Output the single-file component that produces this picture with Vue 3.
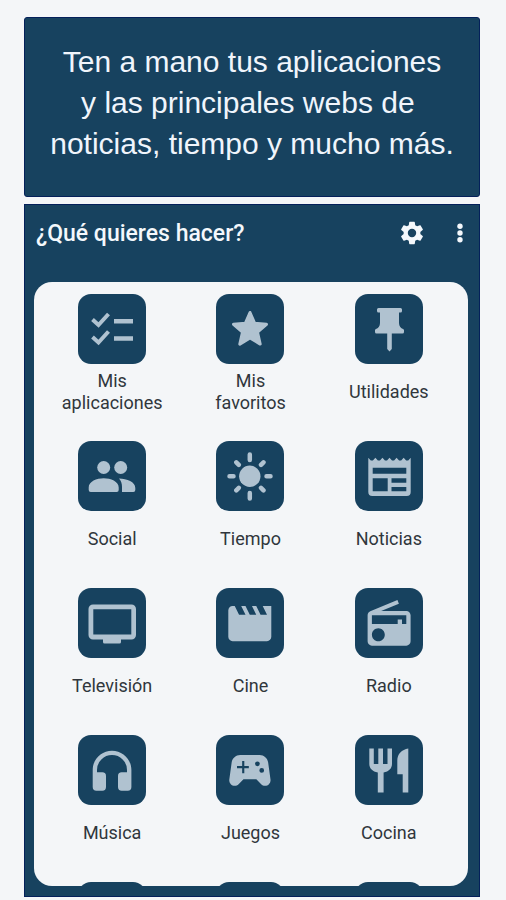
<script setup>
const apps = [
  { id: 'apps', label: 'Mis aplicaciones' },
  { id: 'star', label: 'Mis favoritos' },
  { id: 'pin', label: 'Utilidades' },
  { id: 'social', label: 'Social' },
  { id: 'sun', label: 'Tiempo' },
  { id: 'news', label: 'Noticias' },
  { id: 'tv', label: 'Televisión' },
  { id: 'movie', label: 'Cine' },
  { id: 'radio', label: 'Radio' },
  { id: 'music', label: 'Música' },
  { id: 'games', label: 'Juegos' },
  { id: 'food', label: 'Cocina' }
]
</script>

<template>
  <div class="page">
    <header class="banner">
      <p class="claim">Ten a mano tus aplicaciones<br />y las principales webs de&nbsp;<br />noticias, tiempo y mucho más.</p>
    </header>

    <main class="launcher">
      <div class="toolbar">
        <h1 class="title">¿Qué quieres hacer?</h1>
        <button class="tool" type="button" aria-label="Ajustes">
          <svg class="gear" viewBox="0 0 24 24">
            <path d="M19.14 12.94c.04-.3.06-.61.06-.94s-.02-.64-.07-.94l2.03-1.58c.18-.14.23-.41.12-.61l-1.92-3.32c-.12-.22-.37-.29-.59-.22l-2.39.96c-.5-.38-1.03-.7-1.62-.94l-.36-2.54c-.04-.24-.24-.41-.48-.41h-3.84c-.24 0-.43.17-.47.41l-.36 2.54c-.59.24-1.13.57-1.62.94l-2.39-.96c-.22-.08-.47 0-.59.22L2.74 8.87c-.12.21-.08.47.12.61l2.03 1.58c-.05.3-.09.63-.09.94s.02.64.07.94l-2.03 1.58c-.18.14-.23.41-.12.61l1.92 3.32c.12.22.37.29.59.22l2.39-.96c.5.38 1.03.7 1.62.94l.36 2.54c.05.24.24.41.48.41h3.84c.24 0 .44-.17.47-.41l.36-2.54c.59-.24 1.13-.56 1.62-.94l2.39.96c.22.08.47 0 .59-.22l1.92-3.32c.12-.22.07-.47-.12-.61l-2.01-1.58zM12 15.6a3.6 3.6 0 1 1 0-7.2 3.6 3.6 0 0 1 0 7.2z" />
          </svg>
        </button>
        <button class="tool" type="button" aria-label="Más opciones">
          <svg class="dots" viewBox="0 0 8 24">
            <circle cx="4" cy="5.2" r="2.7" />
            <circle cx="4" cy="12" r="2.7" />
            <circle cx="4" cy="18.8" r="2.7" />
          </svg>
        </button>
      </div>

      <nav class="card">
        <a v-for="app in apps" :key="app.id" class="item" href="#">
          <svg class="tile" viewBox="0 0 68 70" aria-hidden="true">
            <g v-if="app.id === 'apps'" class="line">
              <path d="M14.500 25.500l6 5.500 10-11M14.500 43l6 5.500 10-11" stroke-width="4" />
              <path d="M36 27.200h19M36 44.500h19" stroke-width="4.500" />
            </g>
            <path v-else-if="app.id === 'star'" class="rounded" d="M34 18.500l4.700 10.800 11.800 1-9 7.800 2.700 12L34 43.900 23.800 50.100l2.700-12-9-7.800 11.800-1z" />
            <path v-else-if="app.id === 'pin'" d="M23.500 14h22a1.500 1.500 0 0 1 1.500 1.500V17a1.500 1.500 0 0 1-1.500 1.500H44V29c0 3.500 2 5.200 4 6 .7.300 1 .8 1 1.500V38a1.500 1.500 0 0 1-1.500 1.500H36.800V55l-2.300 2.500-2.300-2.500V39.500H21.500A1.500 1.500 0 0 1 20 38v-1.500c0-.7.300-1.200 1-1.500 2-.8 4-2.500 4-6V18.500h-1.500A1.500 1.500 0 0 1 22 17v-1.500a1.500 1.500 0 0 1 1.500-1.500z" />
            <g v-else-if="app.id === 'social'">
              <circle cx="25.700" cy="26.500" r="6.500" />
              <circle cx="42.700" cy="26.500" r="6.500" />
              <path d="M10.700 49v-2.500c0-6 8-9.200 15-9.200s15 3.200 15 9.200V49a2 2 0 0 1-2 2h-26a2 2 0 0 1-2-2z" />
              <path d="M41 37.500c8 0 16.300 3.500 16.300 9.500v2a2 2 0 0 1-2 2H44V46c0-3.500-1-6.200-3-8.500z" />
            </g>
            <g v-else-if="app.id === 'sun'">
              <circle cx="33.800" cy="35.300" r="10.700" />
              <path class="line" stroke-linecap="round" stroke-width="4.500" d="M33.800 13.500v5.500M33.800 52v5.500M13.500 35.300h4M50.500 35.300h4M20.300 21.300l2.500 2.500M45 46.800l2.500 2.500M47.500 21.300L45 23.800M22.800 46.800l-2.500 2.500" />
            </g>
            <path v-else-if="app.id === 'news'" fill-rule="evenodd" d="M13.300 16.700l2.500 2.800h2.070l2.500-2.800 2.500 2.800h2.070l2.500-2.800 2.500 2.800h2.070l2.500-2.800 2.500 2.800h2.070l2.500-2.800 2.500 2.800h2.070l2.500-2.800 2.500 2.800h2.070L55.700 16.700V51a4 4 0 0 1-4 4H17.300a4 4 0 0 1-4-4zM17.700 26.700v6h33.600v-6zM17.700 37.300v13h15v-13zM36.500 37.300v4.400h14.800v-4.400zM36.500 45.900v4.400h14.800v-4.400z" />
            <path v-else-if="app.id === 'tv'" fill-rule="evenodd" d="M15 16.500h38.500a4.500 4.500 0 0 1 4.500 4.500v26a4.500 4.500 0 0 1-4.500 4.500H43V54a1.500 1.500 0 0 1-1.500 1.500h-15A1.500 1.500 0 0 1 25 54v-2.500H15a4.500 4.500 0 0 1-4.500-4.500V21a4.500 4.500 0 0 1 4.500-4.500zM15.300 21.300v25.200h38V21.300z" />
            <path v-else-if="app.id === 'movie'" transform="translate(8 9.200) scale(2.150 2.200)" d="M18 4l2 4h-3l-2-4h-2l2 4h-3l-2-4H8l2 4H7L5 4H4c-1.100 0-2 .9-2 2v12c0 1.100.9 2 2 2h16c1.100 0 2-.9 2-2V4z" />
            <path v-else-if="app.id === 'radio'" transform="translate(8.300 9.900) scale(2.150 2.170)" d="M3.240 6.150C2.510 6.430 2 7.170 2 8v12c0 1.100.89 2 2 2h16c1.110 0 2-.9 2-2V8c0-1.110-.89-2-2-2H8.300l8.260-3.340L15.880 1zM7 20c-1.660 0-3-1.340-3-3s1.340-3 3-3 3 1.340 3 3-1.340 3-3 3zM20 12h-2v-2h-2v2H4V8h16z" />
            <path v-else-if="app.id === 'music'" d="M34 15.700c-10.700 0-19.300 8.600-19.300 19.300v17a3.700 3.700 0 0 0 3.700 3.700h6A3.700 3.700 0 0 0 28 52V41a3.700 3.700 0 0 0-3.700-3.700H19V35a15 15 0 0 1 30 0v2.300h-5.300A3.700 3.700 0 0 0 40 41v11a3.700 3.700 0 0 0 3.700 3.700h6a3.700 3.700 0 0 0 3.700-3.700V35c0-10.700-8.700-19.300-19.400-19.300z" />
            <path v-else-if="app.id === 'games'" transform="translate(8.100 9) scale(2.150 2.200)" d="M21.580 16.090l-1.090-7.660C20.210 6.460 18.520 5 16.530 5H7.470C5.480 5 3.790 6.460 3.510 8.430l-1.090 7.660C2.200 17.630 3.390 19 4.940 19c.68 0 1.320-.27 1.800-.75L9 16h6l2.250 2.250c.48.48 1.130.75 1.800.75 1.560 0 2.750-1.370 2.530-2.910zM11.500 11H9.400v2.300h-1V11H6v-1h2.400V7.700h1V10h2.100zM15.500 10.100a1.100 1.100 0 1 1 0-2.200 1.100 1.100 0 0 1 0 2.200zM17.500 13.100a1.100 1.100 0 1 1 0-2.200 1.100 1.100 0 0 1 0 2.200z" />
            <g v-else>
              <path d="M14.300 13.500h4.500V29h4.500V13.500H28V29h4.500V13.500H37V29c0 4.500-3.300 7.500-8.400 8.500v20h-5.800v-20c-5.100-1-8.500-4-8.500-8.500z" />
              <path d="M53.300 13.500v44h-5.600V39.300h-5.400V25.500c0-6.500 4.500-11 11-12z" />
            </g>
          </svg>
          <span class="label">{{ app.label }}</span>
        </a>
        <span v-for="n in 3" :key="n" class="item"><span class="tile"></span></span>
      </nav>
    </main>
  </div>
</template>

<style>
body {
  margin: 0;
  background: #f4f6f8;
}
</style>

<style scoped>
.page {
  display: flex;
  flex-direction: column;
  gap: 7px;
  box-sizing: border-box;
  height: 100vh;
  padding: 17px 26px 3px 24px;
  background: #f4f6f8;
  font-family: Roboto, "Liberation Sans", sans-serif;
}

.banner {
  padding: 23px 0 32px;
  border: 1px solid #04205a;
  border-radius: 3px;
  background: #17425f;
}

.claim {
  margin: 0;
  color: #f0f5fc;
  font-family: "Liberation Sans", Arial, sans-serif;
  font-size: 30px;
  line-height: 41px;
  text-align: center;
  white-space: nowrap;
}

.launcher {
  display: flex;
  flex: 1;
  flex-direction: column;
  min-height: 0;
  padding: 0 11px 10px 9px;
  border: 1px solid #04205a;
  background: #17425f;
}

.toolbar {
  display: flex;
  align-items: center;
  gap: 30px;
  height: 56px;
  margin-bottom: 21px;
  padding: 0 4px 0 2px;
}

.title {
  flex: 1;
  margin: 0;
  padding-top: 2px;
  color: #f4f8fc;
  font-size: 23px;
  font-weight: 500;
  line-height: 28px;
}

.tool {
  display: flex;
  padding: 0;
  border: 0;
  background: none;
  fill: #f4f8fc;
}

.gear {
  width: 28px;
  height: 28px;
}

.dots {
  width: 8px;
  height: 24px;
}

.card {
  display: grid;
  flex: 1;
  grid-template-columns: repeat(3, 1fr);
  grid-auto-rows: 120px;
  gap: 27px 0;
  min-height: 0;
  overflow: hidden;
  padding: 12px 10px 0 9px;
  border-radius: 18px;
  background: #f4f6f8;
}

.item {
  display: flex;
  flex-direction: column;
  align-items: center;
  gap: 6px;
  color: #30363c;
  text-decoration: none;
}

.tile {
  flex: none;
  width: 68px;
  height: 70px;
  border-radius: 13px;
  background: #17425f;
  fill: #b0c2d0;
}

.line {
  fill: none;
  stroke: #b0c2d0;
}

.rounded {
  stroke: #b0c2d0;
  stroke-width: 3;
  stroke-linejoin: round;
}

.label {
  display: flex;
  align-items: center;
  width: min-content;
  height: 44px;
  font-size: 18px;
  line-height: 22px;
  text-align: center;
}
</style>
